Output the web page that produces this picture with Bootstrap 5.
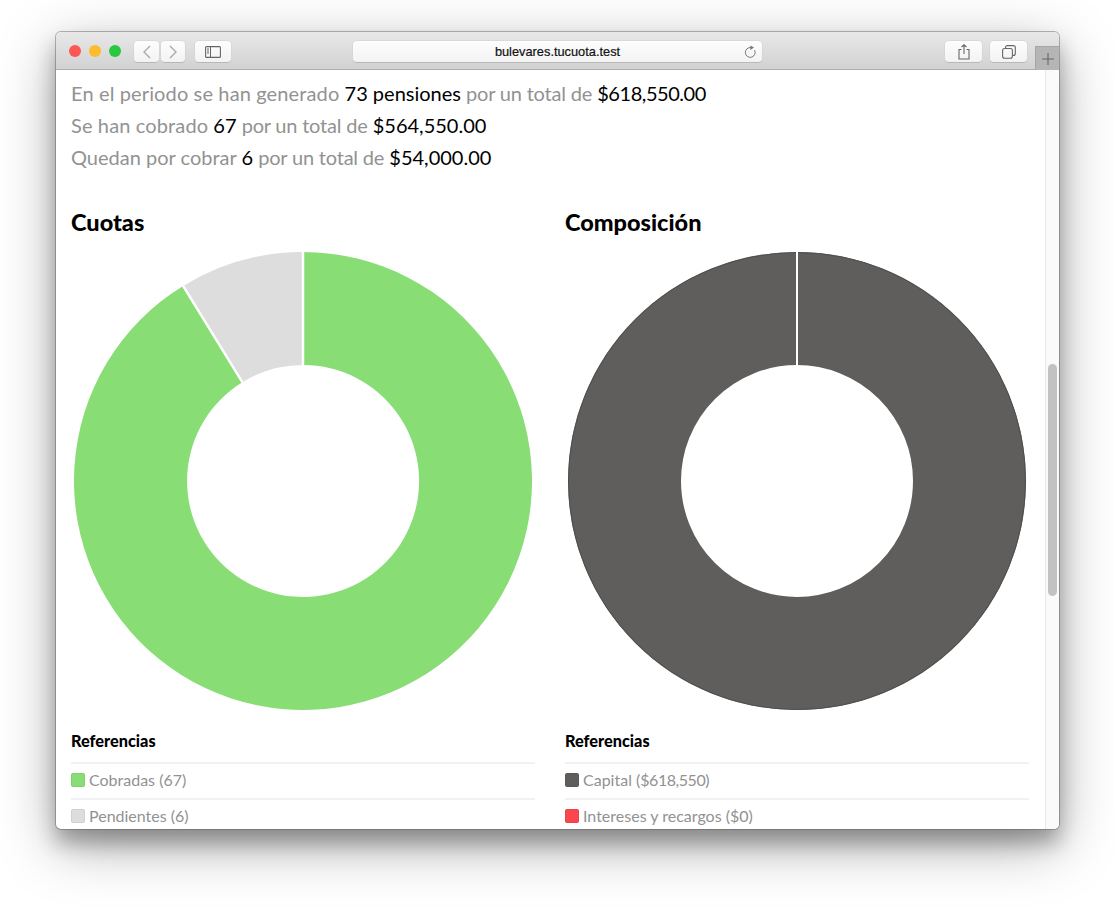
<!DOCTYPE html>
<html lang="es">
<head>
<meta charset="utf-8">
<title>bulevares.tucuota.test</title>
<link rel="stylesheet" href="https://cdn.jsdelivr.net/npm/bootstrap@5.3.0/dist/css/bootstrap.min.css">
<style>
html,body{height:100%;overflow:hidden;background:#fff}
body{padding:32px 56px 0;font-family:Lato,"Liberation Sans",sans-serif}
.win{width:1003px;height:797px;border-radius:5px;overflow:hidden;box-shadow:0 0 0 1px rgba(90,90,90,.45),0 14px 20px rgba(0,0,0,.28),0 16px 56px rgba(0,0,0,.34);background:#fff;display:flex;flex-direction:column;position:relative}
.tbar{height:38px;flex:none;background:linear-gradient(#e9e8e9,#d3d2d3);border-bottom:1px solid #aeadae;padding:9px 0 6px 13px;position:relative}
.dot{width:12px;height:12px;border-radius:50%;margin-right:8px;flex:none}
.tbtn{height:21px;background:linear-gradient(#fdfdfd,#f3f3f3);border-radius:4px;box-shadow:0 1px 0 #b9b8b9,0 0 0 .5px #cfcfcf;display:flex;align-items:center;justify-content:center;flex:none}
.addr{width:409px;margin-left:122px;position:relative;font:400 12.8px "Liberation Sans",sans-serif;color:#111;-webkit-text-stroke:.2px #111}
.reload{position:absolute;right:5px;top:4px}
.plus{position:absolute;right:0;top:14px;width:24px;height:24px;background:#b6b5b6;border-left:1px solid #a5a5a5;border-top:1px solid #a5a5a5}
.bodywrap{flex:1;display:flex;min-height:0}
.pagearea{width:989px;flex:none;overflow:hidden;padding:7px 16px 0 15px}
.sbar{width:14px;flex:none;background:#fafafa;border-left:1px solid #e8e8e8;padding-top:294px;padding-left:2px}
.thumb{width:9px;height:232px;border-radius:5px;background:#c2c2c2}
.sumline{font-size:20px;line-height:32px;color:#929292;margin:0;white-space:nowrap}
.sumline b{font-weight:400;color:#000}
.wide{letter-spacing:.13px}
.tight{letter-spacing:-.2px}
.amt{letter-spacing:-.45px}
.chartrow{--bs-gutter-x:30px;margin-top:35px}
.charttitle{font-size:23.5px;font-weight:900;line-height:28px;color:#000;margin:0 0 16px}
.donut{display:block;width:458px;height:458px;margin-left:3px}
.legtitle{font-size:16.3px;font-weight:900;line-height:20px;color:#000;margin:21px 0 11px}
.legrow{border-top:2px solid #f2f2f2;height:36px;padding-bottom:2px;display:flex;align-items:center;color:#929292;font-size:16px;gap:4px;white-space:nowrap}
.sw{width:14px;height:14px;border-radius:2px;flex:none;border:1px solid rgba(0,0,0,.06)}
</style>
</head>
<body>
<div class="win">
  <div class="tbar d-flex align-items-start">
    <div class="dot" style="background:#fc5753;margin-top:4px"></div>
    <div class="dot" style="background:#fdbc2e;margin-top:4px"></div>
    <div class="dot" style="background:#28c840;margin-top:4px;margin-right:13px"></div>
    <div class="tbtn" style="width:25px"><svg width="10" height="14" viewBox="0 0 10 14"><path d="M8 1 2 7l6 6" fill="none" stroke="#a9a9a9" stroke-width="1.4"/></svg></div>
    <div class="tbtn" style="width:24px;margin-left:2px"><svg width="10" height="14" viewBox="0 0 10 14"><path d="m2 1 6 6-6 6" fill="none" stroke="#a9a9a9" stroke-width="1.4"/></svg></div>
    <div class="tbtn" style="width:36px;margin-left:10px"><svg width="16" height="12" viewBox="0 0 16 12"><rect x=".6" y=".6" width="14.8" height="10.8" rx="1" fill="none" stroke="#666" stroke-width="1.1"/><path d="M5.5 .6v10.8M2 3h2M2 5h2M2 7h2" stroke="#666" stroke-width="1" fill="none"/></svg></div>
    <div class="tbtn addr">bulevares.tucuota.test
      <svg class="reload" width="13" height="14" viewBox="0 0 13 14"><path d="M10.6 5.2A4.9 4.9 0 1 1 7 2.6" fill="none" stroke="#777" stroke-width="1"/><path d="M6.4 .4 10 2.6 6.4 5z" fill="#777"/></svg>
    </div>
    <div class="tbtn" style="width:37px;margin-left:183px"><svg width="12" height="16" viewBox="0 0 12 16"><path d="M3.5 5.5H1v9.5h10V5.5H8.500M6 10V.8M3.500 3 6 .8 8.500 3" fill="none" stroke="#666" stroke-width="1.1"/></svg></div>
    <div class="tbtn" style="width:37px;margin-left:8px"><svg width="14" height="14" viewBox="0 0 14 14"><rect x=".6" y="3.500" width="9.800" height="9.800" rx="2" fill="none" stroke="#666" stroke-width="1.100"/><path d="M3.500 3.300V2.600a2 2 0 0 1 2-2h5.800a2 2 0 0 1 2 2v5.800a2 2 0 0 1-2 2h-.8" fill="none" stroke="#666" stroke-width="1.100"/></svg></div>
    <div class="plus d-flex align-items-center justify-content-center"><svg width="12" height="12" viewBox="0 0 12 12"><path d="M6 0v12M0 6h12" stroke="#666" stroke-width="1.100"/></svg></div>
  </div>
  <div class="bodywrap">
    <div class="pagearea">
      <p class="sumline"><span class="wide">En el periodo se han generado</span> <b>73 pensiones</b> <span class="tight">por un total de</span> <b class="amt">$618,550.00</b></p>
      <p class="sumline"><span class="wide">Se han cobrado</span> <b>67</b> <span class="tight">por un total de</span> <b>$564,550.00</b></p>
      <p class="sumline">Quedan por cobrar <b>6</b> <span class="tight">por un total de</span> <b>$54,000.00</b></p>
      <div class="row chartrow">
        <div class="col-6">
          <h2 class="charttitle">Cuotas</h2>
          <svg class="donut" viewBox="0 0 458 458">
            <path d="M229 0A229 229 0 1 1 109.100 33.900L168.300 130.200A116 116 0 1 0 229 113Z" fill="#88dd75"/>
            <path d="M229 0V113A116 116 0 0 0 168.300 130.200L109.100 33.900A229 229 0 0 1 229 0Z" fill="#dddddd"/>
            <path d="M229 0V113M109.100 33.900 168.300 130.200" stroke="#fff" stroke-width="2.500" fill="none"/>
          </svg>
          <div class="legtitle">Referencias</div>
          <div class="legrow"><span class="sw" style="background:#88dd75"></span>Cobradas (67)</div>
          <div class="legrow"><span class="sw" style="background:#dddddd"></span>Pendientes (6)</div>
        </div>
        <div class="col-6">
          <h2 class="charttitle">Composición</h2>
          <svg class="donut" viewBox="0 0 458 458">
            <circle cx="229" cy="229" r="172.500" fill="none" stroke="#5f5e5c" stroke-width="113"/>
            <circle cx="229" cy="229" r="228.500" fill="none" stroke="#4f4f4f" stroke-width="1"/>
            <path d="M229 0V113" stroke="#fff" stroke-width="2"/>
          </svg>
          <div class="legtitle">Referencias</div>
          <div class="legrow"><span class="sw" style="background:#5f5e5c"></span><span>Capital (<span class="amt">$618,550</span>)</span></div>
          <div class="legrow"><span class="sw" style="background:#fb4650"></span>Intereses y recargos ($0)</div>
        </div>
      </div>
    </div>
    <div class="sbar"><div class="thumb"></div></div>
  </div>
</div>
</body>
</html>
